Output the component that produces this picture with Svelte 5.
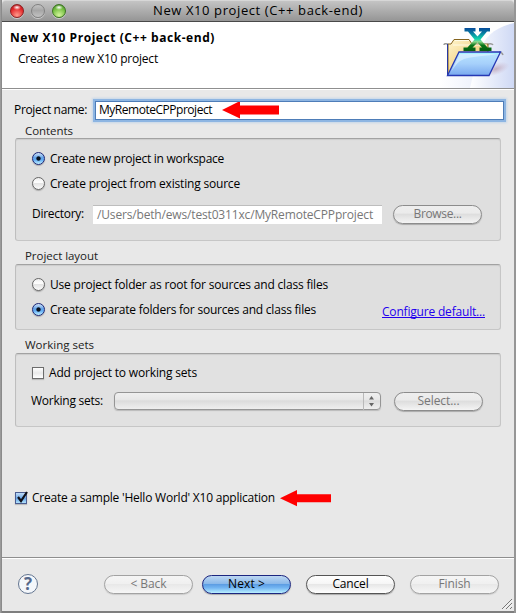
<script>
  let projectName = 'MyRemoteCPPproject';
  let location = '/Users/beth/ews/test0311xc/MyRemoteCPPproject';

  // Tracks a label out so that it fills the given width.
  function fit(node, width) {
    const natural = node.getBoundingClientRect().width;
    const count = node.textContent.length;
    node.style.letterSpacing = `${(width - natural) / count}px`;
  }
</script>

<div class="desktop">
  <div class="window">
    <div class="titlebar">
      <i class="light red"></i><i class="light grey"></i><i class="light green"></i>
      <span class="title"><span use:fit={210}>New X10 project (C++ back-end)</span></span>
    </div>

    <header>
      <div class="heading">
        <h1><span use:fit={205}>New X10 Project (C++ back-end)</span></h1>
        <p><span use:fit={140}>Creates a new X10 project</span></p>
      </div>
      <svg class="banner" width="74" height="66" viewBox="440 22 74 66">
        <defs>
          <linearGradient id="sky" x1="0" x2="1"><stop offset="0" stop-color="#fff" /><stop offset="1" stop-color="#cfd9f5" /></linearGradient>
          <linearGradient id="gold" x1="0" y1="0" x2="1" y2="1"><stop offset="0" stop-color="#fff6cf" /><stop offset="1" stop-color="#eab54a" /></linearGradient>
          <linearGradient id="blue" x1="0" y1="0" x2="0" y2="1"><stop offset="0" stop-color="#b9e6ff" /><stop offset=".5" stop-color="#a6d0fb" /><stop offset="1" stop-color="#78a8ee" /></linearGradient>
          <linearGradient id="xfill" x1="0" y1="0" x2="0" y2="1"><stop offset="0" stop-color="#064b9b" /><stop offset=".2" stop-color="#0876a0" /><stop offset=".48" stop-color="#10d8ad" /><stop offset=".6" stop-color="#8ed58a" /><stop offset=".75" stop-color="#087719" /><stop offset="1" stop-color="#075c10" /></linearGradient>
          <radialGradient id="shade"><stop offset="0" stop-color="#b99daf" stop-opacity=".75" /><stop offset="1" stop-color="#c9b3c9" stop-opacity="0" /></radialGradient>
        </defs>
        <path d="M440 72H514V88H440Z" fill="url(#sky)" opacity=".75" />
        <path d="M514 23C495 27 484 37 478 54L470 88H514Z" fill="url(#sky)" />
        <ellipse cx="496" cy="69" rx="14" ry="6" transform="rotate(-18 496 69)" fill="url(#shade)" />
        <path d="M444 45q0-2 4-1M493 45q-1-2-5-1M503 55q-1-3-4-3M455 55q1-3 4-2" fill="none" stroke="#999" stroke-width="1.5" />
        <path d="M448 75V44H451L454 39.500H469L472 44H488V75Z" fill="url(#gold)" stroke="#84631e" />
        <path d="M453 45H487M455 40.500h14" stroke="#fffbe7" fill="none" />
        <path d="M447.500 44V75" stroke="#2838a0" />
        <path d="M464.500 28h11v3.500h-2.500l4.500 5 4.500-5h-3v-3.500h11v3.500h-3l-6.500 8 7 8h4v3.500h-12v-3.500h2.500l-4.500-5-5 5h3v3.500h-12v-3.500h4l7-8-6.500-8h-3.500z" fill="url(#xfill)" />
        <path d="M459 52H500.500L489 75.500H447.500Z" fill="url(#blue)" stroke="#2638b4" stroke-width="1.300" />
        <path d="M460 53.500H498C489 57 470 55 460 61C456 64 453 69 451 72Z" fill="#e2f5ff" opacity=".6" />
        <path d="M459.500 53.500H498.500" stroke="#a4f3ff" />
      </svg>
    </header>

    <main>
      <div class="name-row">
        <label for="pname"><span use:fit={73}>Project name:</span></label>
        <div id="pname" class="field focused">
          <span use:fit={113}>{projectName}</span>
          <svg class="arrow" width="58" height="18" viewBox="0 0 58 18"><path d="M0 9L18 0V4.500H57V13.500H18V17.500Z" fill="red" /></svg>
        </div>
      </div>

      <div class="caption first"><span use:fit={48}>Contents</span></div>
      <section class="group contents">
        <div class="option"><i class="radio on"></i><span use:fit={174}>Create new project in workspace</span></div>
        <div class="option"><i class="radio"></i><span use:fit={190}>Create project from existing source</span></div>
        <div class="line directory">
          <span class="lead"><span use:fit={52}>Directory:</span></span>
          <div class="field plain"><span use:fit={276}>{location}</span></div>
          <button class="dim"><span use:fit={48}>Browse...</span></button>
        </div>
      </section>

      <div class="caption"><span use:fit={73}>Project layout</span></div>
      <section class="group layout">
        <div class="option"><i class="radio"></i><span use:fit={278}>Use project folder as root for sources and class files</span></div>
        <div class="option">
          <i class="radio on"></i><span use:fit={266}>Create separate folders for sources and class files</span>
          <a href="#defaults"><span use:fit={103}>Configure default...</span></a>
        </div>
      </section>

      <div class="caption"><span use:fit={69}>Working sets</span></div>
      <section class="group sets">
        <div class="option"><i class="check"></i><span use:fit={148}>Add project to working sets</span></div>
        <div class="line working">
          <span class="lead"><span use:fit={72}>Working sets:</span></span>
          <div class="combo">
            <svg width="17" height="17" viewBox="0 0 17 17"><path d="M.5 0V17" stroke="#b9b9b9" /><path d="M6 6.500L8.500 3L11 6.500ZM6 10L8.500 13.500L11 10Z" fill="#666" /></svg>
          </div>
          <button class="dim"><span use:fit={42}>Select...</span></button>
        </div>
      </section>

      <div class="sample">
        <i class="check on"><svg width="14" height="15" viewBox="0 0 14 15"><path d="M3 7L6 11L12 2" fill="none" stroke="#101018" stroke-width="2.200" /></svg></i>
        <span use:fit={243}>Create a sample 'Hello World' X10 application</span>
        <svg class="arrow" width="52" height="17" viewBox="0 0 52 17"><path d="M0 8.300L17 0V4.300H51V12.300H17V16.300Z" fill="red" /></svg>
      </div>
    </main>

    <footer>
      <div class="help">?</div>
      <button class="dim faint"><span use:fit={36}>&lt; Back</span></button>
      <button class="default"><span use:fit={37}>Next &gt;</span></button>
      <button class="cancel"><span use:fit={36}>Cancel</span></button>
      <button class="dim faint"><span use:fit={32}>Finish</span></button>
      <svg class="grip" width="12" height="12" viewBox="0 0 12 12"><path d="M1 11L11 1M5 11L11 5M9 11L11 9" stroke="#777" /><path d="M2 11.500L11.500 2M6 11.500L11.500 6" stroke="#fff" stroke-width=".6" /></svg>
    </footer>
  </div>
</div>

<style>
  :global(body) { margin: 0; }
  * { box-sizing: border-box; }
  .desktop {
    width: 516px; height: 613px; padding: 0 2px 2px 1px;
    background: linear-gradient(90deg, #a4a4a4, #7e7e7e 2px, #7e7e7e 514px, #969696 514px);
    font: 12px/16px "Open Sans", "Noto Sans", sans-serif; color: #000; overflow: hidden;
  }
  span { white-space: pre; }
  .window {
    width: 513px; height: 611px; border: solid #8b8b8b; border-width: 0 0 0 1px;
    background: #e8e8e8; display: flex; flex-direction: column;
  }
  .titlebar {
    height: 22px; flex: none; display: flex; align-items: center; padding: 0 0 0 8px; gap: 7px;
    border-top: 1px solid #d7d7d7; border-bottom: 1px solid #494949;
    background: linear-gradient(#c4c4c4, #959595); border-radius: 4px 4px 0 0;
  }
  .light { width: 14px; height: 14px; border-radius: 50%; flex: none; box-shadow: 0 1px 0 #ccc; }
  .red { border: 1px solid #8d2020; background: radial-gradient(ellipse 4px 2.5px at 50% 20%, #fff, #fff0), radial-gradient(circle at 50% 85%, #ff9b8c, #e4292c 60%, #a31017); }
  .grey { border: 1px solid #808080; background: linear-gradient(#c4c4c4, #a6a6a6 45%, #c3c3c3); }
  .green { border: 1px solid #3c7423; background: radial-gradient(ellipse 4px 2.5px at 50% 20%, #fff, #fff0), radial-gradient(circle at 50% 85%, #d4f59c, #75bf42 60%, #397d1c); }
  .title { font-size: 13px; margin: 0 0 2px 80px; }
  header {
    height: 67px; flex: none; display: flex; justify-content: space-between; background: #fff;
    border-bottom: 1px solid #8f8f8f;
  }
  .heading { padding: 7px 0 0 8px; }
  h1 { margin: 0; font-size: 12px; line-height: 18px; font-weight: 700; }
  p { margin: 4px 0 0 8px; line-height: 16px; }
  main { flex: 1; padding: 9px 0 0 13px; border-top: 1px solid #fff; display: flex; flex-direction: column; }
  .name-row { display: flex; align-items: center; height: 22px; }
  .name-row label { width: 82px; margin-left: -1px; padding-bottom: 1px; }
  .field { display: flex; align-items: center; background: #fff; }
  .focused {
    width: 407px; height: 17px; padding-left: 3px; gap: 10px; outline: 1px solid #4e7db8;
    box-shadow: 0 0 0 3px #8db5e2, 0 0 2px 4px #c5d7ea;
  }
  .caption { height: 23px; padding: 7px 0 0 10px; line-height: 16px; font-size: 11.5px; color: #222; }
  .caption.first { height: 17px; padding-top: 2px; }
  .group {
    width: 486px; border: 1px solid #c6c6c6; border-top-color: #a2a2a2; border-left-color: #bebebe; border-radius: 3px;
    background: #dfdfdf; box-shadow: inset 0 1px 1px #cdcdcd; padding: 7px 0 0 16px; flex: none;
  }
  .contents { height: 103px; }
  .layout { height: 66px; }
  .sets { height: 74px; background: #e1e1e1; padding-top: 6px; }
  .option { display: flex; align-items: center; height: 25px; }
  .radio {
    width: 13px; height: 13px; border-radius: 50%; flex: none; margin-right: 5px;
    border: 1px solid #666; background: linear-gradient(#eee, #fff 40%, #e4e4e4 50%, #fafafa); box-shadow: 0 1px 1px #aaa;
  }
  .radio.on { border-color: #1d2775; background: radial-gradient(circle, #07101c 1.7px, #07101c00 2.6px), linear-gradient(#c4dbf5 5%, #5ea0e8 45%, #67b0f5 65%, #c3f2ff); }
  .check {
    width: 12px; height: 12px; flex: none; margin-right: 5px; border: 1px solid #6c6c6c;
    background: linear-gradient(#fff, #e9e9e9 50%, #fff); box-shadow: 0 1px 1px #bbb;
  }
  .check.on { border-color: #4b5d91; background: linear-gradient(#c1dcf6, #6aa7e9 55%, #b2e2fb); }
  .check.on svg { display: block; margin: -3px 0 0 -1px; }
  .line { display: flex; align-items: center; height: 24px; }
  .directory { margin-top: 6px; }
  .directory .lead { width: 61px; }
  .plain { width: 289px; height: 19px; padding-left: 4px; border-top: 1px solid #bdbdbd; color: #777; }
  .line button { margin-left: 11px; }
  button {
    width: 89px; height: 19px; padding: 0 0 1px; flex: none; font: inherit; line-height: 16px; color: #000;
    display: flex; align-items: center; justify-content: center;
    border: 1px solid #555; border-radius: 10px; box-shadow: 0 1px 1px #aaa;
    background: linear-gradient(#fff, #f6f6f6 45%, #e7e7e7 50%, #fff);
  }
  .dim { color: #777; border-color: #8c8c8c; background: linear-gradient(#eee, #ebebeb 40%, #dedede 50%, #f4f4f4); }
  .faint { border-color: #a2a2a2; box-shadow: 0 1px 1px #ccc; background: linear-gradient(#f5f5f5, #f0f0f0 45%, #e8e8e8 50%, #f6f6f6); }
  .default { border-color: #1c2680; background: linear-gradient(#bdd7f2, #8bb9ea 45%, #5d9ee4 50%, #74b6f3 70%, #baf0ff); }
  a { margin: 4px 0 0 66px; color: #2300ee; text-decoration: none; }
  a span { display: inline-block; border-bottom: 1px solid #2300ee; line-height: 13px; height: 13px; }
  .working { margin-top: 4px; margin-left: -1px; }
  .working .lead { width: 83px; }
  .working button { margin-left: 13px; }
  .combo {
    width: 267px; height: 18px; display: flex; justify-content: flex-end; border: 1px solid #959595; border-radius: 4px;
    background: linear-gradient(#efefef, #e8e8e8 40%, #dcdcdc 50%, #efefef); box-shadow: 0 1px 1px #bbb;
  }
  .sample { display: flex; align-items: center; height: 18px; margin-top: 62px; }
  .sample .arrow { margin-left: 5px; }
  footer { height: 54px; flex: none; border-top: 1px solid #8e8e8e; box-shadow: inset 0 1px #fff; display: flex; align-items: center; padding: 0 0 1px 16px; position: relative; }
  .help {
    width: 20px; height: 20px; border: 1.500px solid #62748f; border-radius: 50%; background: #f4f7fb; margin-right: 66px;
    color: #56698b; font: 700 17px/18px "Open Sans", sans-serif; text-align: center;
  }
  footer button + button { margin-left: 9px; }
  footer .cancel, footer .cancel + button { margin-left: 15px; }
  .grip { position: absolute; right: 1px; bottom: 1px; }
</style>
